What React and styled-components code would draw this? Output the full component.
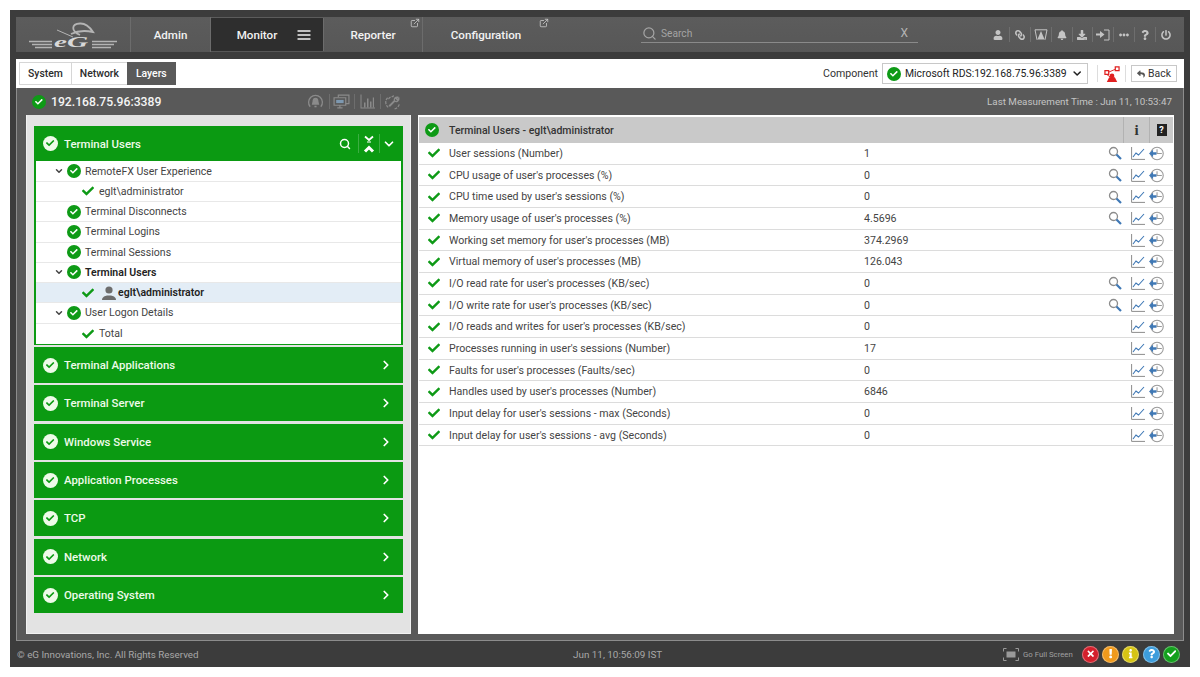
import React from "react";
import styled, { createGlobalStyle } from "styled-components";
import {
  FaUser,
  FaLink,
  FaBell,
  FaDownload,
  FaEllipsisH,
  FaQuestion,
  FaPowerOff,
  FaCheck,
  FaTimes,
  FaExclamation,
  FaInfo,
  FaReply,
} from "react-icons/fa";
import { FiSearch, FiChevronDown, FiChevronRight, FiMenu, FiExternalLink } from "react-icons/fi";

const GlobalStyle = createGlobalStyle`
  html, body {
    margin: 0;
    padding: 0;
    background: #fff;
    font-family: Roboto, "Liberation Sans", sans-serif;
    overflow: hidden;
  }
`;

const Frame = styled.div`
  width: 1180px;
  height: 657px;
  margin: 10px;
  padding: 7px 6px 0 6px;
  box-sizing: border-box;
  background: #3c3c3c;
  display: flex;
  flex-direction: column;
`;

const NavBar = styled.div`
  height: 35px;
  flex: none;
  display: flex;
  align-items: stretch;
  background: linear-gradient(#5c5c5c, #575757);
`;

const LogoBox = styled.div`
  width: 115px;
  position: relative;
  display: flex;
  align-items: center;
  justify-content: center;
  border-right: 1px solid #6c6c6c;
  box-sizing: border-box;
`;

const LogoText = styled.span`
  position: absolute;
  left: 38px;
  top: 17px;
  font: italic 700 15px/17px "Liberation Serif", serif;
  color: #d8d8d8;
  transform: scaleX(1.95);
  transform-origin: left center;
`;

const NavItem = styled.div`
  width: ${(props) => props.$width}px;
  position: relative;
  box-sizing: border-box;
  display: flex;
  align-items: center;
  justify-content: center;
  gap: 19px;
  padding-left: ${(props) => (props.$active ? 15 : 0)}px;
  padding-right: ${(props) => props.$endPad || 0}px;
  margin: ${(props) => (props.$active ? "1px 0" : 0)};
  color: #f2f2f2;
  font-size: 11.6px;
  font-weight: 500;
  border-right: ${(props) => (props.$last ? "none" : "1px solid #6c6c6c")};
  background: ${(props) => (props.$active ? "#2e2e2e" : "transparent")};
  svg.menu {
    font-size: 16px;
  }
`;

const ExternalMark = styled.span`
  position: absolute;
  top: 1px;
  right: ${(props) => props.$right}px;
  color: #c8c8c8;
  font-size: 10px;
  line-height: 10px;
`;

const SearchBox = styled.div`
  width: 277px;
  height: 26px;
  margin: 0 0 0 88px;
  box-sizing: border-box;
  border-bottom: 1px solid #8a8a8a;
  display: flex;
  align-items: center;
  gap: 4px;
  padding: 7px 10px 0 1px;
  color: #a4a4a4;
  font-size: 10.2px;
  svg {
    font-size: 15px;
  }
`;

const SearchClose = styled.span`
  margin-left: auto;
  font-size: 12px;
  color: #b4b4b4;
`;

const ToolIcons = styled.div`
  margin-left: auto;
  padding-right: 8px;
  display: flex;
  align-items: center;
`;

const ToolIcon = styled.div`
  width: 20.9px;
  height: 15px;
  display: flex;
  align-items: center;
  justify-content: center;
  color: #c4c4c4;
  font-size: 10px;
  border-left: ${(props) => (props.$first ? "none" : "1px solid #6e6e6e")};
  box-sizing: border-box;
  svg.flip {
    transform: scaleX(-1);
  }
`;

const TabStrip = styled.div`
  height: 29px;
  flex: none;
  margin-top: 7px;
  padding: 3px 7px 3px 3px;
  box-sizing: border-box;
  background: #fff;
  display: flex;
  align-items: center;
`;

const Tab = styled.div`
  height: 23px;
  padding: 0 8px;
  display: flex;
  align-items: center;
  font-size: 10.4px;
  font-weight: 500;
  box-sizing: border-box;
  border: 1px solid ${(props) => (props.$active ? "#5a5a5a" : "#d6d6d6")};
  margin-right: -1px;
  color: ${(props) => (props.$active ? "#fff" : "#2c2c2c")};
  background: ${(props) => (props.$active ? "#5a5a5a" : "#fff")};
`;

const ComponentLabel = styled.span`
  margin-left: auto;
  margin-right: 4px;
  font-size: 10.6px;
  color: #333;
`;

const ComponentSelect = styled.div`
  width: 206px;
  height: 21px;
  box-sizing: border-box;
  border: 1px solid #c8c8c8;
  display: flex;
  align-items: center;
  padding: 0 4px 0 4px;
  gap: 4px;
  font-size: 10.4px;
  color: #222;
  white-space: nowrap;
  svg.caret {
    margin-left: auto;
    font-size: 13px;
    stroke-width: 3;
  }
`;

const Divider = styled.div`
  width: 1px;
  height: 17px;
  background: #ddd;
  margin: 0 ${(props) => props.$right}px 0 ${(props) => props.$left}px;
`;

const BackButton = styled.div`
  width: 46px;
  height: 17px;
  box-sizing: border-box;
  border: 1px solid #c8c8c8;
  display: flex;
  align-items: center;
  justify-content: center;
  gap: 3px;
  font-size: 10.4px;
  color: #333;
  svg {
    font-size: 8px;
    color: #555;
  }
`;

const WorkArea = styled.div`
  height: 553px;
  flex: none;
  background: #595959;
  border: 1px solid #8c8c8c;
  border-top: none;
  box-sizing: border-box;
  display: flex;
  flex-direction: column;
`;

const WorkHead = styled.div`
  height: 27px;
  flex: none;
  padding: 0 11px 0 15px;
  display: flex;
  align-items: center;
`;

const HostName = styled.span`
  margin-left: 5px;
  width: 252px;
  color: #f4f4f4;
  font-size: 12.2px;
  font-weight: 500;
`;

const HeadIcon = styled.div`
  width: 25.5px;
  height: 15px;
  display: flex;
  align-items: center;
  justify-content: center;
  border-left: ${(props) => (props.$first ? "none" : "1px solid #6e6e6e")};
  box-sizing: border-box;
`;

const MeasureTime = styled.span`
  margin-left: auto;
  color: #c4c4c4;
  font-size: 9.8px;
`;

const Panels = styled.div`
  flex: 1;
  min-height: 0;
  padding: 0 9px 6px 9px;
  display: grid;
  grid-template-columns: 385px 756px;
  gap: 7px;
`;

const LeftPanel = styled.div`
  background: #e3e3e3;
  border: 1px solid #f2f2f2;
  border-top: none;
  padding: 11px 7px 0;
  display: flex;
  flex-direction: column;
  gap: 2.33px;
`;

const Accordion = styled.div`
  background: #0b9a12;
  flex: none;
  padding-bottom: ${(props) => (props.$open ? 1 : 0)}px;
`;

const AccordionHead = styled.div`
  height: ${(props) => (props.$open ? 35 : 36)}px;
  padding: 0 ${(props) => (props.$open ? 6 : 9)}px 0 9px;
  display: flex;
  align-items: center;
  color: #eefbe9;
  font-size: 11.4px;
  font-weight: 500;
`;

const AccordionTitle = styled.span`
  margin-left: 6px;
`;

const HeadTools = styled.div`
  margin-left: auto;
  display: flex;
  align-items: center;
  color: #fff;
  svg {
    stroke-width: 3;
  }
`;

const ToolCell = styled.div`
  width: ${(props) => props.$width}px;
  height: 19px;
  display: flex;
  flex-direction: column;
  align-items: center;
  justify-content: center;
  border-left: ${(props) => (props.$line ? "1px solid #3cae42" : "none")};
  box-sizing: border-box;
  font-size: ${(props) => props.$size || 12}px;
`;

const Tree = styled.div`
  margin: 0 2px;
  padding-top: 0.5px;
  background: #fff;
`;

const TreeRow = styled.div`
  height: 20.25px;
  box-sizing: border-box;
  display: flex;
  align-items: center;
  border-bottom: 1px solid #e8e8e8;
  padding-left: ${(props) => props.$indent}px;
  background: ${(props) => (props.$selected ? "#e3edf6" : "#fff")};
  font-size: 10.55px;
  font-weight: ${(props) => (props.$bold ? 600 : 400)};
  color: ${(props) => (props.$bold ? "#222" : "#444")};
  &:last-child {
    border-bottom: none;
  }
`;

const TreeCaret = styled(FiChevronDown)`
  width: 10px;
  height: 10px;
  stroke-width: 3.5;
  color: #444;
  margin-right: 3px;
`;

const TreeLabel = styled.span`
  margin-left: ${(props) => props.$gap}px;
  display: inline-flex;
`;

const RightPanel = styled.div`
  background: #fff;
  padding: 2px 1px 0;
  display: flex;
  flex-direction: column;
`;

const MetricHeader = styled.div`
  height: 26px;
  flex: none;
  background: #c9c9c9;
  display: flex;
  align-items: center;
  padding-left: 6px;
  font-size: 10.5px;
  font-weight: 500;
  color: #333;
`;

const MetricTitle = styled.span`
  margin-left: 10px;
`;

const HeaderBtn = styled.div`
  width: ${(props) => props.$width}px;
  height: 26px;
  display: flex;
  align-items: center;
  justify-content: center;
  border-left: 1px solid #b2b2b2;
  box-sizing: border-box;
  margin-left: ${(props) => (props.$push ? "auto" : 0)};
`;

const InfoMark = styled.span`
  font: 700 15px/15px "Liberation Serif", serif;
  color: #333;
`;

const HelpMark = styled.span`
  width: 10px;
  height: 12px;
  background: #222;
  color: #fff;
  font-size: 9px;
  font-weight: 700;
  line-height: 12px;
  text-align: center;
  display: block;
`;

const MetricRow = styled.div`
  height: 21.68px;
  flex: none;
  box-sizing: border-box;
  display: grid;
  grid-template-columns: 21px 415px 244px 23px 18px 1fr;
  align-items: center;
  padding-left: 9px;
  border-bottom: 1px solid #dcdcdc;
  font-size: 10.6px;
  color: #444;
  svg {
    display: block;
  }
`;

const CheckMark = styled(FaCheck)`
  color: #0e9a16;
  font-size: ${(props) => props.size || 12}px;
`;

const StatusDot = styled.span`
  width: ${(props) => props.$size}px;
  height: ${(props) => props.$size}px;
  flex: none;
  border-radius: 50%;
  background: ${(props) => props.$color || "#0e9a16"};
  color: ${(props) => props.$ink || "#fff"};
  display: inline-flex;
  align-items: center;
  justify-content: center;
  font-size: ${(props) => props.$size * 0.55}px;
  box-shadow: ${(props) => (props.$ring ? "0 0 0 1px rgba(255,255,255,0.35) inset" : "none")};
`;

const Footer = styled.div`
  flex: 1;
  display: flex;
  align-items: center;
  padding-left: 1px;
  font-size: 9.8px;
  color: #a8a8a8;
`;

const Copyright = styled.span`
  width: 556px;
`;

const FooterClock = styled.span`
  font-size: 9.9px;
`;

const FullScreen = styled.div`
  margin-left: auto;
  display: flex;
  align-items: center;
  gap: 4px;
  font-size: 7.8px;
  color: #a0a0a0;
  margin-right: 9px;
`;

const Lights = styled.div`
  display: flex;
  gap: 3.3px;
  margin-right: 4px;
`;

const GreenCheck = ({ size = 14 }) => (
  <StatusDot $size={size}>
    <FaCheck />
  </StatusDot>
);

const WhiteCheck = () => (
  <StatusDot $size={15} $color="#eefbe9" $ink="#0b9a12">
    <FaCheck />
  </StatusDot>
);

const Logo = () => (
  <LogoBox>
    <svg width="92" height="30" viewBox="0 0 92 30" fill="none" stroke="#b4b4b4">
      <path d="M2 21.500h23M5 24.500h20M8 27.500h17M65 21.500h25M65 24.500h22M65 27.500h19" strokeWidth="1.300" />
      <path d="M53 15C44 11 44 4 53 3.500c5-.3 10 4 13 8.500-7-1.500-16-1-22 2" strokeWidth="1.800" />
      <path d="M30 10l16 7" strokeWidth="1" />
    </svg>
    <LogoText>eG</LogoText>
  </LogoBox>
);

const MonitorAlertIcon = () => (
  <svg width="14" height="12" viewBox="0 0 14 12" fill="none" stroke="#c4c4c4">
    <path d="M1 .8h12M1 .8l2 10M13 .8l-2 10" strokeWidth="1" />
    <path d="M7 2l3.600 8.500H3.400z" fill="#c4c4c4" stroke="none" />
  </svg>
);

const SigninIcon = () => (
  <svg width="14" height="12" viewBox="0 0 14 12" fill="none" stroke="#c4c4c4">
    <path d="M0 4.500h4V2l4.500 3.500L4 9V6.500H0z" fill="#c4c4c4" stroke="none" />
    <path d="M8 1h5v10H8" strokeWidth="1" />
  </svg>
);

const AlarmIcon = () => (
  <svg width="17" height="16" viewBox="0 0 16 15" fill="none" stroke="#8b8b8b" strokeWidth="1.200">
    <path d="M3 12A6.500 6.500 0 1 1 13 12" />
    <path d="M8 3.500c-2 0-2.800 1.500-2.800 3.500L4.500 10h7l-.7-3c0-2-.8-3.500-2.800-3.500z" fill="#8b8b8b" stroke="none" />
    <path d="M7 11h2v1.500H7z" fill="#8b8b8b" stroke="none" />
  </svg>
);

const ScreensIcon = () => (
  <svg width="17" height="15" viewBox="0 0 16 14" fill="none" stroke="#8b8b8b" strokeWidth="1.100">
    <path d="M5 3V1h10v8h-3" />
    <path d="M1 3.500h11v7H1zM4 13h5M6.500 10.500V13" />
    <path d="M3 5.500h7v3H3z" fill="#7d98b0" stroke="none" />
  </svg>
);

const BarsIcon = () => (
  <svg width="15" height="15" viewBox="0 0 15 14" fill="#8b8b8b">
    <path d="M.5 0h1v13h13.500v1H.5z" />
    <path d="M4 8h1.500v5H4zM7 4h1.500v9H7zM10 7h1.500v6H10zM12.800 3h1.200v10h-1.200z" />
  </svg>
);

const GearToolIcon = () => (
  <svg width="16" height="16" viewBox="0 0 15 15" fill="none" stroke="#8b8b8b" strokeWidth="1.200">
    <path d="M3 12.500a6 6 0 0 1-.5-9l1 .8a4.500 4.500 0 0 1 4-1.800l.5-1.500" strokeDasharray="2.600 1" />
    <path d="M9 14a6 6 0 0 0 4.500-5" strokeDasharray="2.600 1" />
    <path d="M4 11.500L9 6.500" strokeWidth="1.800" />
    <path d="M9 6.500a2.500 2.500 0 0 1 3-3.500l-1.500 1.500 1 1 1.500-1.500a2.500 2.500 0 0 1-4 2.500z" />
  </svg>
);

const CollapseIcon = () => (
  <svg width="12" height="18" viewBox="0 0 12 18" fill="none" stroke="#fff" strokeWidth="2">
    <path d="M2 1.500L6 5l4-3.500" strokeWidth="1.800" />
    <path d="M2 16.500L6 12.500l4 4" />
    <path d="M4 7h4" strokeWidth="1" />
  </svg>
);

const NetworkIcon = () => (
  <svg width="16" height="16" viewBox="0 0 17 17" fill="#e02020">
    <path d="M1 5h4v4H1z" fill="none" stroke="#e02020" strokeWidth="1.300" />
    <path d="M12 1h4v4h-4z" fill="none" stroke="#e02020" strokeWidth="1.300" />
    <path d="M5 6.500L12 3.500M3 9l4 3" stroke="#e02020" strokeWidth="1" fill="none" />
    <path d="M3 17l2.500-5h6L14 17z" />
    <circle cx="8.500" cy="10.500" r="2.500" />
  </svg>
);

const ZoomIcon = () => (
  <svg width="14" height="14" viewBox="0 0 14 14" fill="none">
    <circle cx="5.500" cy="5.500" r="4" stroke="#8c8c8c" strokeWidth="1.300" />
    <path d="M8.500 8.500L13 13" stroke="#3f78b5" strokeWidth="2.200" />
  </svg>
);

const TrendIcon = () => (
  <svg width="14" height="13" viewBox="0 0 14 13" fill="none">
    <path d="M.6 0v12.400H14" stroke="#8c8c8c" strokeWidth="1" />
    <path d="M2 10l3-4 2.500 2L13 2" stroke="#3f78b5" strokeWidth="1.100" />
  </svg>
);

const HistoryIcon = () => (
  <svg width="15" height="15" viewBox="0 0 14 14" fill="none">
    <circle cx="7.500" cy="7" r="5.800" stroke="#9a9a9a" strokeWidth="1" />
    <path d="M7.500 3v4H12" stroke="#9a9a9a" strokeWidth="1" />
    <path d="M0 7l3.800-3.500v2.300H7v2.400H3.800v2.300z" fill="#3f78b5" />
  </svg>
);

const UserGlyph = () => (
  <svg width="14" height="14" viewBox="0 0 14 14" fill="#6d6d6d">
    <circle cx="7" cy="4" r="3.600" />
    <path d="M0 14c0-3 3-4 5-4.500h4c2 .5 5 1.500 5 4.500z" />
  </svg>
);

const FullScreenIcon = () => (
  <svg width="16" height="13" viewBox="0 0 16 13" fill="none" stroke="#9a9a9a" strokeWidth="1">
    <path d="M.5 3.500v-3h3M12.500.5h3v3M15.500 9.500v3h-3M3.500 12.500h-3v-3" />
    <path d="M3.500 3.500h9v6h-9z" fill="#9a9a9a" stroke="none" />
  </svg>
);

const treeRows = [
  { label: "RemoteFX User Experience", caret: true, indent: 18, kind: "dot" },
  { label: "eglt\\administrator", indent: 46, kind: "check" },
  { label: "Terminal Disconnects", indent: 31, kind: "dot" },
  { label: "Terminal Logins", indent: 31, kind: "dot" },
  { label: "Terminal Sessions", indent: 31, kind: "dot" },
  { label: "Terminal Users", caret: true, indent: 18, kind: "dot", bold: true },
  { label: "eglt\\administrator", indent: 46, kind: "check", bold: true, selected: true, user: true },
  { label: "User Logon Details", caret: true, indent: 18, kind: "dot" },
  { label: "Total", indent: 46, kind: "check" },
];

const layers = [
  "Terminal Applications",
  "Terminal Server",
  "Windows Service",
  "Application Processes",
  "TCP",
  "Network",
  "Operating System",
];

const metrics = [
  { name: "User sessions (Number)", value: "1", zoom: true },
  { name: "CPU usage of user's processes (%)", value: "0", zoom: true },
  { name: "CPU time used by user's sessions (%)", value: "0", zoom: true },
  { name: "Memory usage of user's processes (%)", value: "4.5696", zoom: true },
  { name: "Working set memory for user's processes (MB)", value: "374.2969" },
  { name: "Virtual memory of user's processes (MB)", value: "126.043" },
  { name: "I/O read rate for user's processes (KB/sec)", value: "0", zoom: true },
  { name: "I/O write rate for user's processes (KB/sec)", value: "0", zoom: true },
  { name: "I/O reads and writes for user's processes (KB/sec)", value: "0" },
  { name: "Processes running in user's sessions (Number)", value: "17" },
  { name: "Faults for user's processes (Faults/sec)", value: "0" },
  { name: "Handles used by user's processes (Number)", value: "6846" },
  { name: "Input delay for user's sessions - max (Seconds)", value: "0" },
  { name: "Input delay for user's sessions - avg (Seconds)", value: "0" },
];

const App = () => {
  return (
    <>
      <GlobalStyle />
      <Frame>
        <NavBar>
          <Logo />
          <NavItem $width={80}>Admin</NavItem>
          <NavItem $width={113} $active>
            Monitor
            <FiMenu className="menu" />
          </NavItem>
          <NavItem $width={99}>
            Reporter
            <ExternalMark $right={2}>
              <FiExternalLink />
            </ExternalMark>
          </NavItem>
          <NavItem $width={130} $last $endPad={4}>
            Configuration
            <ExternalMark $right={4}>
              <FiExternalLink />
            </ExternalMark>
          </NavItem>
          <SearchBox>
            <FiSearch />
            Search
            <SearchClose>X</SearchClose>
          </SearchBox>
          <ToolIcons>
            <ToolIcon $first>
              <FaUser />
            </ToolIcon>
            <ToolIcon>
              <FaLink className="flip" />
            </ToolIcon>
            <ToolIcon>
              <MonitorAlertIcon />
            </ToolIcon>
            <ToolIcon>
              <FaBell />
            </ToolIcon>
            <ToolIcon>
              <FaDownload />
            </ToolIcon>
            <ToolIcon>
              <SigninIcon />
            </ToolIcon>
            <ToolIcon>
              <FaEllipsisH />
            </ToolIcon>
            <ToolIcon>
              <FaQuestion />
            </ToolIcon>
            <ToolIcon>
              <FaPowerOff />
            </ToolIcon>
          </ToolIcons>
        </NavBar>

        <TabStrip>
          <Tab>System</Tab>
          <Tab>Network</Tab>
          <Tab $active>Layers</Tab>
          <ComponentLabel>Component</ComponentLabel>
          <ComponentSelect>
            <GreenCheck size={14} />
            Microsoft RDS:192.168.75.96:3389
            <FiChevronDown className="caret" />
          </ComponentSelect>
          <Divider $left={9} $right={6} />
          <NetworkIcon />
          <Divider $left={5} $right={5} />
          <BackButton>
            <FaReply />
            Back
          </BackButton>
        </TabStrip>

        <WorkArea>
          <WorkHead>
            <GreenCheck size={14} />
            <HostName>192.168.75.96:3389</HostName>
            <HeadIcon $first>
              <AlarmIcon />
            </HeadIcon>
            <HeadIcon>
              <ScreensIcon />
            </HeadIcon>
            <HeadIcon>
              <BarsIcon />
            </HeadIcon>
            <HeadIcon>
              <GearToolIcon />
            </HeadIcon>
            <MeasureTime>Last Measurement Time : Jun 11, 10:53:47</MeasureTime>
          </WorkHead>

          <Panels>
            <LeftPanel>
              <Accordion $open>
                <AccordionHead $open>
                  <WhiteCheck />
                  <AccordionTitle>Terminal Users</AccordionTitle>
                  <HeadTools>
                    <ToolCell $width={26}>
                      <FiSearch />
                    </ToolCell>
                    <ToolCell $width={21} $line>
                      <CollapseIcon />
                    </ToolCell>
                    <ToolCell $width={18} $line $size={14}>
                      <FiChevronDown />
                    </ToolCell>
                  </HeadTools>
                </AccordionHead>
                <Tree>
                  {treeRows.map((row, i) => (
                    <TreeRow key={i} $indent={row.indent} $bold={row.bold} $selected={row.selected}>
                      {row.caret && <TreeCaret />}
                      {row.kind === "dot" ? <GreenCheck size={14} /> : <CheckMark size={12} />}
                      {row.user && (
                        <TreeLabel $gap={8}>
                          <UserGlyph />
                        </TreeLabel>
                      )}
                      <TreeLabel $gap={row.user ? 2 : row.kind === "dot" ? 4 : 5}>{row.label}</TreeLabel>
                    </TreeRow>
                  ))}
                </Tree>
              </Accordion>
              {layers.map((name) => (
                <Accordion key={name}>
                  <AccordionHead>
                    <WhiteCheck />
                    <AccordionTitle>{name}</AccordionTitle>
                    <HeadTools>
                      <ToolCell $width={17} $size={14}>
                        <FiChevronRight />
                      </ToolCell>
                    </HeadTools>
                  </AccordionHead>
                </Accordion>
              ))}
            </LeftPanel>

            <RightPanel>
              <MetricHeader>
                <GreenCheck size={14} />
                <MetricTitle>Terminal Users - eglt\administrator</MetricTitle>
                <HeaderBtn $width={26} $push>
                  <InfoMark>i</InfoMark>
                </HeaderBtn>
                <HeaderBtn $width={24}>
                  <HelpMark>?</HelpMark>
                </HeaderBtn>
              </MetricHeader>
              {metrics.map((m) => (
                <MetricRow key={m.name}>
                  <CheckMark size={12} />
                  <span>{m.name}</span>
                  <span>{m.value}</span>
                  <span>{m.zoom && <ZoomIcon />}</span>
                  <TrendIcon />
                  <HistoryIcon />
                </MetricRow>
              ))}
            </RightPanel>
          </Panels>
        </WorkArea>

        <Footer>
          <Copyright>© eG Innovations, Inc. All Rights Reserved</Copyright>
          <FooterClock>Jun 11, 10:56:09 IST</FooterClock>
          <FullScreen>
            <FullScreenIcon />
            Go Full Screen
          </FullScreen>
          <Lights>
            <StatusDot $size={17} $color="#d4202c" $ring>
              <FaTimes />
            </StatusDot>
            <StatusDot $size={17} $color="#f09a1c" $ring>
              <FaExclamation />
            </StatusDot>
            <StatusDot $size={17} $color="#d6c414" $ring>
              <FaInfo />
            </StatusDot>
            <StatusDot $size={17} $color="#3d9ddc" $ring>
              <FaQuestion />
            </StatusDot>
            <StatusDot $size={17} $color="#14a01e" $ring>
              <FaCheck />
            </StatusDot>
          </Lights>
        </Footer>
      </Frame>
    </>
  );
};

export default App;
